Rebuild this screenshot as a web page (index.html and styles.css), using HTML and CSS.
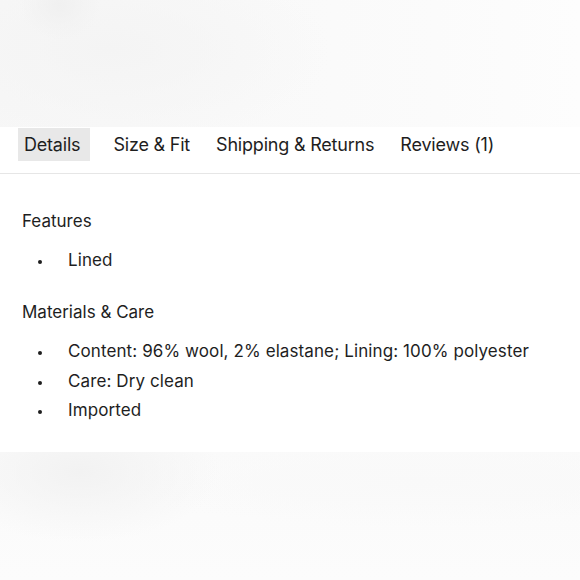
FILE: index.html
```html
<!DOCTYPE html>
<html lang="en">
<head>
<meta charset="utf-8">
<title>Product details</title>
<link rel="stylesheet" href="styles.css">
</head>
<body>
<div class="page">
  <div class="hero"></div>
  <nav class="tabs">
    <span class="tab active">Details</span>
    <span class="tab">Size &amp; Fit</span>
    <span class="tab">Shipping &amp; Returns</span>
    <span class="tab">Reviews (1)</span>
  </nav>
  <section class="details">
    <h3 class="heading">Features</h3>
    <ul class="list">
      <li>Lined</li>
    </ul>
    <h3 class="heading">Materials &amp; Care</h3>
    <ul class="list">
      <li>Content: 96% wool, 2% elastane; Lining: 100% polyester</li>
      <li>Care: Dry clean</li>
      <li>Imported</li>
    </ul>
  </section>
  <div class="footer-fade"></div>
</div>
</body>
</html>
```
FILE: styles.css
```css
html, body {
  margin: 0;
  padding: 0;
  background: #ffffff;
}
body {
  font-family: Inter, "Liberation Sans", sans-serif;
  color: #1e1e1e;
  width: 580px;
  height: 580px;
  overflow: hidden;
}
.page {
  display: flex;
  flex-direction: column;
  height: 580px;
}
.hero {
  height: 127px;
  flex: none;
  background:
    radial-gradient(ellipse 40px 35px at 60px 5px, #f0f0f0 0%, rgba(240,240,240,0) 100%),
    radial-gradient(ellipse 220px 100px at 110px 50px, #f4f4f4 0%, rgba(244,244,244,0) 100%),
    linear-gradient(90deg, #f7f7f7 0%, #f9f9f9 40%, #fbfbfb 75%, #fdfdfd 100%);
}
.tabs {
  display: flex;
  align-items: center;
  gap: 14px;
  padding: 1px 0 12px 18px;
  border-bottom: 1px solid #e6e6e6;
}
.tab {
  font-size: 18px;
  line-height: 33px;
  padding: 0 6px;
  letter-spacing: -0.2px;
  color: #1e1e1e;
}
.tab.active {
  background: #e8e8e8;
  padding-right: 10px;
  margin-right: 3px;
}
.details {
  padding: 33px 22px 0 22px;
  height: 278px;
  box-sizing: border-box;
  flex: none;
}
.heading {
  margin: 0;
  font-size: 17px;
  font-weight: normal;
  line-height: 28px;
}
.list {
  list-style: none;
  margin: 11px 0 22px 0;
  padding: 0;
  font-size: 17px;
  line-height: 29.75px;
  letter-spacing: 0.1px;
}
.list li {
  display: flex;
  align-items: baseline;
}
.list li::before {
  content: "";
  flex: none;
  width: 4px;
  height: 4px;
  border-radius: 50%;
  background: #1e1e1e;
  margin: 0 26px 0 16px;
  position: relative;
  top: -2px;
}
.footer-fade {
  flex: 1;
  background:
    radial-gradient(ellipse 140px 70px at 80px 20px, #f2f2f2 0%, rgba(242,242,242,0) 100%),
    radial-gradient(ellipse 320px 45px at 420px 30px, #f9f9f9 0%, rgba(249,249,249,0) 100%),
    linear-gradient(180deg, #fafafa 0%, #fcfcfc 100%);
}
```
